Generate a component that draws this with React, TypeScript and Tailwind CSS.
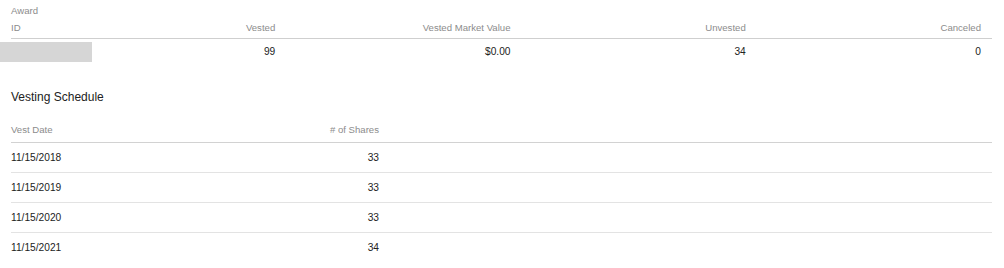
import React from "react";

const font = { fontFamily: '"Liberation Sans", Arial, Helvetica, sans-serif' };

export default function App() {
  const schedule = [
    ["11/15/2018", "33"],
    ["11/15/2019", "33"],
    ["11/15/2020", "33"],
    ["11/15/2021", "34"],
  ];
  return (
    <div className="w-[1004px] h-[268px] bg-white pl-[11px] pr-[12px] pt-[2px]" style={font}>
      {/* Award table */}
      <div className="grid grid-cols-[40px_1fr_1fr_1fr_1fr] border-b border-[#cfcfcf] pb-[2px] text-[9.6px] leading-[17px] text-[#8c8c8c]">
        <div className="self-end">Award<br />ID</div>
        <div className="self-end text-right pr-[11px]">Vested</div>
        <div className="self-end text-right pr-[11px]">Vested Market Value</div>
        <div className="self-end text-right pr-[11px]">Unvested</div>
        <div className="self-end text-right pr-[11px]">Canceled</div>
      </div>
      <div className="grid grid-cols-[40px_1fr_1fr_1fr_1fr] items-center py-[2px] text-[10.2px] leading-[20px] text-[#222]">
        <div className="h-[20px]">
          <div className="-ml-[11px] w-[92px] h-[20px] bg-[#d6d6d6]" />
        </div>
        <div className="text-right pr-[11px] pt-[1px]">99</div>
        <div className="text-right pr-[11px] pt-[1px]">$0.00</div>
        <div className="text-right pr-[11px] pt-[1px]">34</div>
        <div className="text-right pr-[11px] pt-[1px]">0</div>
      </div>

      {/* Vesting Schedule */}
      <div className="mt-[25px] text-[12px] leading-[16px] text-[#222]">Vesting Schedule</div>
      <div className="mt-[13px]">
        <div className="grid grid-cols-[184px_195px_1fr] h-[25px] items-center border-b border-[#d2d2d2] text-[9.6px] text-[#8c8c8c]">
          <div>Vest Date</div>
          <div className="text-right pr-[11px]">&#35; of Shares</div>
          <div />
        </div>
        {schedule.map(([d, n], i) => (
          <div
            key={d}
            className={`grid grid-cols-[184px_195px_1fr] h-[30px] items-center text-[10.2px] text-[#222] ${
              i < schedule.length - 1 ? "border-b border-[#e3e3e3]" : ""
            }`}
          >
            <div>{d}</div>
            <div className="text-right pr-[11px]">{n}</div>
            <div />
          </div>
        ))}
      </div>
    </div>
  );
}
